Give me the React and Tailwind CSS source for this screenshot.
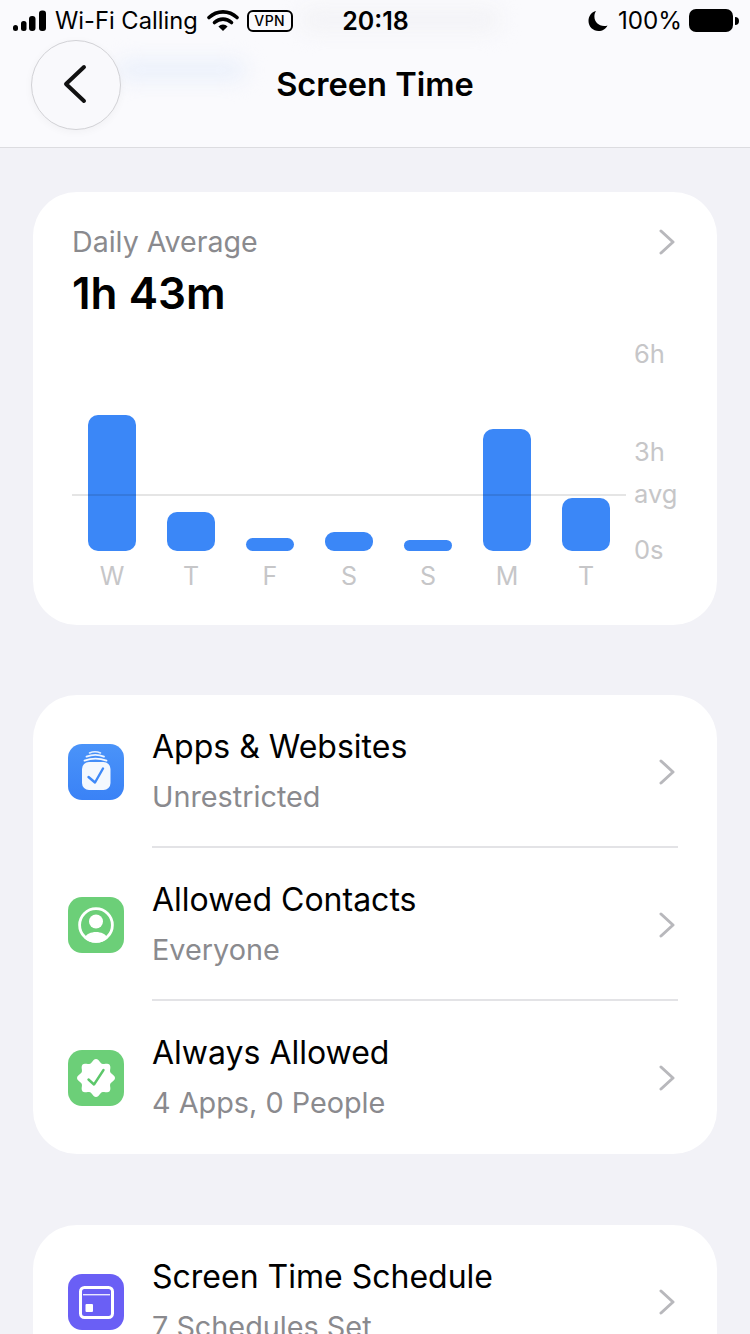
import React from 'react';

const FONT = 'font-["Inter","Liberation_Sans",sans-serif]';

const bars = [
  { day: 'W', height: 'h-[136px]', radius: 'rounded-[10px]' },
  { day: 'T', height: 'h-[39px]', radius: 'rounded-[10px]' },
  { day: 'F', height: 'h-[13px]', radius: 'rounded-[6.5px]' },
  { day: 'S', height: 'h-[19px]', radius: 'rounded-[9px]' },
  { day: 'S', height: 'h-[11px]', radius: 'rounded-[5.5px]' },
  { day: 'M', height: 'h-[122px]', radius: 'rounded-[10px]' },
  { day: 'T', height: 'h-[53px]', radius: 'rounded-[10px]' },
];

const badgePoints = () => {
  const pts = [];
  for (let i = 0; i < 96; i++) {
    const a = (i / 96) * Math.PI * 2;
    const r = 17.2 + 1.8 * Math.cos(a * 8);
    pts.push(`${(28 + r * Math.sin(a)).toFixed(2)},${(28 - r * Math.cos(a)).toFixed(2)}`);
  }
  return pts.join(' ');
};

const AppsIcon = () => (
  <svg width="56" height="56" viewBox="0 0 56 56">
    <defs>
      <linearGradient id="appsBg" x1="0" y1="0" x2="0" y2="1">
        <stop offset="0" stopColor="#4a93f9" />
        <stop offset="1" stopColor="#3a82f6" />
      </linearGradient>
    </defs>
    <rect width="56" height="56" rx="14" fill="url(#appsBg)" />
    <path d="M21.5 9Q27 6.4 32.5 9" fill="none" stroke="#fff" strokeWidth="1.6" strokeLinecap="round" opacity="0.85" />
    <path d="M18.5 12.6Q27.5 9.2 36 12.6" fill="none" stroke="#fff" strokeWidth="1.8" strokeLinecap="round" opacity="0.9" />
    <path d="M16.5 16.6Q27.5 12.6 38.5 16.6" fill="none" stroke="#fff" strokeWidth="1.8" strokeLinecap="round" opacity="0.95" />
    <rect x="14" y="18" width="28.5" height="28" rx="7" fill="#f4f8fe" />
    <path d="M20.5 33l6.5 5.5L35 24.5" fill="none" stroke="#3f89f8" strokeWidth="2.4" strokeLinecap="round" strokeLinejoin="round" />
  </svg>
);

const ContactsIcon = () => (
  <svg width="56" height="56" viewBox="0 0 56 56">
    <rect width="56" height="56" rx="14" fill="#6ccf78" />
    <circle cx="28" cy="28" r="16.4" fill="none" stroke="#fff" strokeWidth="2.8" />
    <circle cx="28" cy="24.5" r="7" fill="#fff" />
    <path d="M16 41C18.5 37 23 35 28 35C33 35 37.5 37 40 41C37 44 33 45.8 28 45.8C23 45.8 19 44 16 41Z" fill="#fff" />
  </svg>
);

const AllowedIcon = () => (
  <svg width="56" height="56" viewBox="0 0 56 56">
    <rect width="56" height="56" rx="14" fill="#6ccf78" />
    <polygon points={badgePoints()} fill="#fff" />
    <path d="M20.5 29.5l5.5 5L35.5 20" fill="none" stroke="#5cc76a" strokeWidth="2.4" strokeLinecap="round" strokeLinejoin="round" />
  </svg>
);

const ScheduleIcon = () => (
  <svg width="56" height="56" viewBox="0 0 56 56">
    <rect width="56" height="56" rx="14" fill="#6a5ff5" />
    <rect x="12.5" y="13.5" width="32" height="30" rx="4" fill="none" stroke="#fff" strokeWidth="3" />
    <rect x="15" y="20" width="27" height="1.4" fill="#e9e7ff" />
    <rect x="17.5" y="30" width="7.5" height="8" rx="1" fill="#fff" />
  </svg>
);

const Chevron = () => (
  <svg width="18" height="26" viewBox="0 0 18 26" fill="none" className="shrink-0 -translate-x-[1px]">
    <path d="M2 2l12 11L2 24" stroke="#b8b8bc" strokeWidth="3" strokeLinecap="round" strokeLinejoin="round" />
  </svg>
);

const StatusBar = () => (
  <div className="grid grid-cols-[1fr_auto_1fr] items-center h-[42px] pl-[13px] pr-[11px] text-black">
    <div className="flex items-center">
      <svg width="34" height="22" viewBox="0 0 34 22" fill="#000">
        <rect x="0" y="15" width="5" height="6" rx="2.5" />
        <rect x="8" y="11" width="5.5" height="10" rx="2.5" />
        <rect x="16" y="6" width="6.5" height="15" rx="3" />
        <rect x="26" y="0.5" width="7" height="20.5" rx="3" />
      </svg>
      <span className="ml-[8px] text-[23.7px] leading-none whitespace-nowrap">Wi-Fi Calling</span>
      <svg width="32" height="24" viewBox="0 0 32 24" className="ml-[9px]" fill="none" stroke="#000" strokeWidth="3.6" strokeLinecap="round">
        <path d="M2 8.5C10 1 22 1 30 8.5" />
        <path d="M7.5 13.5C12.5 9 19.5 9 24.5 13.5" />
        <path d="M16 22l-4.6-4.6a6.5 6.5 0 0 1 9.2 0Z" fill="#000" stroke="none" />
      </svg>
      <div className="ml-[8px] flex items-center justify-center w-[46px] h-[22px] border-2 border-black rounded-[6px] text-[14px] font-medium leading-none tracking-[0.5px]">
        VPN
      </div>
    </div>
    <div className="text-[25px] font-semibold leading-none -ml-[1px]">20:18</div>
    <div className="flex items-center justify-end">
      <svg width="20" height="22" viewBox="0 0 20 22" fill="#000">
        <path d="M8 1C3.5 2.2 0.5 6 0.5 11c0 5.8 4.6 10 10 10 4 0 7.4-2.2 9-5.6-1 .4-2 .6-3.3.6C10.5 16 6.4 11.8 6.4 6.6 6.4 4.4 7 2.6 8 1Z" />
      </svg>
      <span className="ml-[10px] text-[24.2px] leading-none">100%</span>
      <div className="ml-[7px] w-[44px] h-[23px] bg-black rounded-[7px]" />
      <div className="ml-[2px] w-[4px] h-[8px] bg-black rounded-r-full" />
    </div>
  </div>
);

const Header = () => (
  <header className="relative h-[148px] bg-[#fafafd] border-b border-[#dcdce0] overflow-hidden">
    <div className="absolute left-[116px] top-[60px] w-[130px] h-[20px] bg-[#eaf0fb] rounded-full blur-[10px]" />
    <div className="absolute left-[300px] top-[8px] w-[200px] h-[24px] bg-[#f3f3f6] rounded-full blur-[10px]" />
    <div className="relative">
      <StatusBar />
      <h1 className="text-center text-[32.6px] leading-none font-semibold text-black mt-[26px]">Screen Time</h1>
    </div>
    <button className="absolute left-[31px] top-[40px] w-[90px] h-[90px] rounded-full border border-[#d2d2d6] bg-[#f9f9fc] shadow-[0_2px_8px_rgba(0,0,0,0.04)] flex items-center justify-center">
      <svg width="26" height="40" viewBox="0 0 26 40" fill="none" className="-ml-[2px] -mt-[2px]">
        <path d="M22 3L4 20l18 17" stroke="#111" strokeWidth="4" strokeLinecap="round" strokeLinejoin="round" />
      </svg>
    </button>
  </header>
);

const UsageCard = () => (
  <section className="bg-white rounded-[44px] h-[433px] pl-[39px] pr-[39px] pt-[34px]">
    <div className="flex items-center justify-between h-[32px]">
      <span className="text-[28.6px] leading-none text-[#8a8a8e]">Daily Average</span>
      <Chevron />
    </div>
    <div className="text-[44px] leading-none font-semibold text-black mt-[13px]">1h 43m</div>
    <div className="relative flex mt-[22px]">
      <div className="w-[554px] shrink-0">
        <div className="flex items-end justify-between pl-[16px] pr-[16px] h-[214px]">
          {bars.map((bar, i) => (
            <div key={i} className={`w-[48px] bg-[#3b87f7] ${bar.height} ${bar.radius}`} />
          ))}
        </div>
        <div className="flex justify-between pl-[16px] pr-[16px] mt-[11px]">
          {bars.map((bar, i) => (
            <span key={i} className="w-[48px] text-center text-[25px] leading-[28px] text-[#c6c6c8]">{bar.day}</span>
          ))}
        </div>
      </div>
      <div className="flex flex-col ml-[8px] text-[25.5px] leading-[28px] text-[#c6c6c8]">
        <span className="mt-[3px]">6h</span>
        <span className="mt-[70px]">3h</span>
        <span className="mt-[14px]">avg</span>
        <span className="mt-[28px]">0s</span>
      </div>
      <div className="absolute left-0 top-[157px] w-[554px] h-[2px] bg-black/10" />
    </div>
  </section>
);

const Row = ({ icon, title, subtitle, divider }) => (
  <div className="flex items-center h-[153px] pl-[35px] relative">
    <div className="shrink-0 w-[56px] h-[56px]">{icon}</div>
    <div className="ml-[28px] flex-1">
      <div className="text-[32px] leading-none text-black">{title}</div>
      <div className="text-[28.8px] leading-none text-[#8a8a8e] mt-[20px] whitespace-nowrap">{subtitle}</div>
    </div>
    <div className="pr-[39px]"><Chevron /></div>
    {divider && <div className="absolute left-[119px] right-[39px] bottom-0 h-[2px] bg-[#e3e3e6]" />}
  </div>
);

export default function App() {
  return (
    <div className={`w-[750px] h-[1334px] overflow-hidden bg-[#f2f2f7] ${FONT}`}>
      <Header />
      <main className="px-[33px] pt-[44px] flex flex-col">
        <UsageCard />
        <section className="bg-white rounded-[44px] mt-[70px]">
          <Row icon={<AppsIcon />} title="Apps & Websites" subtitle="Unrestricted" divider />
          <Row icon={<ContactsIcon />} title="Allowed Contacts" subtitle="Everyone" divider />
          <Row icon={<AllowedIcon />} title="Always Allowed" subtitle="4 Apps, 0 People" />
        </section>
        <section className="bg-white rounded-[44px] mt-[71px]">
          <Row icon={<ScheduleIcon />} title="Screen Time Schedule" subtitle="7 Schedules Set" />
        </section>
      </main>
    </div>
  );
}
